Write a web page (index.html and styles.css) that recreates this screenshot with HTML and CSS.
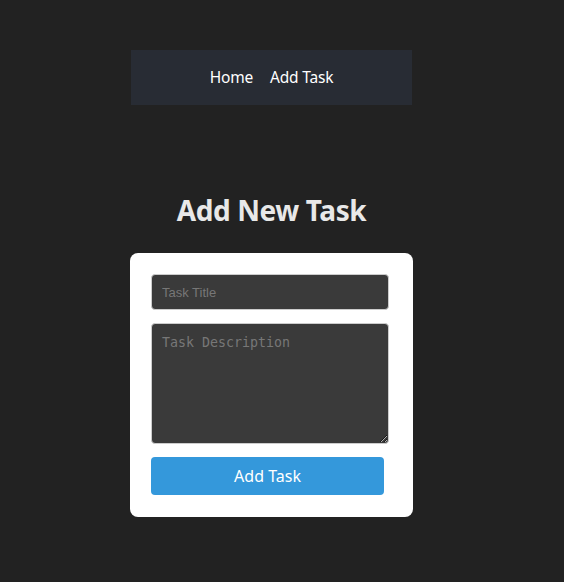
FILE: index.html
```html
<!DOCTYPE html>
<html>
<head>
<meta charset="utf-8">
<link rel="stylesheet" href="styles.css">
</head>
<body>
<div class="page">
  <nav class="nav">
    <a href="#" class="nav-link">Home</a>
    <a href="#" class="nav-link">Add Task</a>
  </nav>
  <h1 class="title">Add New Task</h1>
  <form class="card">
    <input class="field" type="text" placeholder="Task Title">
    <textarea class="field area" placeholder="Task Description"></textarea>
    <button class="btn" type="button">Add Task</button>
  </form>
</div>
</body>
</html>
```
FILE: styles.css
```css
html, body {
  margin: 0;
  padding: 0;
  background: #222222;
}
.page {
  width: 283px;
  margin-left: 130px;
  padding-top: 50px;
  font-family: "Noto Sans", "Open Sans", sans-serif;
}
.nav {
  margin-left: 1px;
  width: 281px;
  height: 55px;
  background: #282c34;
  display: flex;
  justify-content: center;
  align-items: center;
  gap: 17px;
  padding-bottom: 2px;
  box-sizing: border-box;
}
.nav-link {
  color: #ffffff;
  text-decoration: none;
  font-size: 15.5px;
  letter-spacing: -0.2px;
}
.title {
  margin: 87px 0 0;
  text-align: center;
  color: #e8e8e8;
  font-size: 28px;
  font-weight: 700;
  line-height: 36px;
  letter-spacing: -0.4px;
}
.card {
  margin-top: 25px;
  background: #ffffff;
  border-radius: 8px;
  padding: 21px 24px 22px 21px;
  display: flex;
  flex-direction: column;
  align-items: flex-start;
}
.field {
  box-sizing: border-box;
  width: 238px;
  height: 36px;
  background: #3a3a3a;
  border: 1px solid #cccccc;
  border-radius: 4px;
  padding: 0 10px;
  color: #eeeeee;
  font-family: "Liberation Sans", Arial, sans-serif;
  font-size: 13px;
  margin: 0 0 13px;
}
.field::placeholder {
  color: #777777;
}
.area {
  height: 121px;
  padding: 11px 10px 9px;
  font-family: "DejaVu Sans Mono", monospace;
  font-size: 13.3px;
  resize: vertical;
}
.btn {
  width: 233px;
  height: 38px;
  background: #3498db;
  color: #ffffff;
  border: none;
  border-radius: 4px;
  font-family: "Noto Sans", "Open Sans", sans-serif;
  font-size: 16px;
  padding: 0;
}
```
